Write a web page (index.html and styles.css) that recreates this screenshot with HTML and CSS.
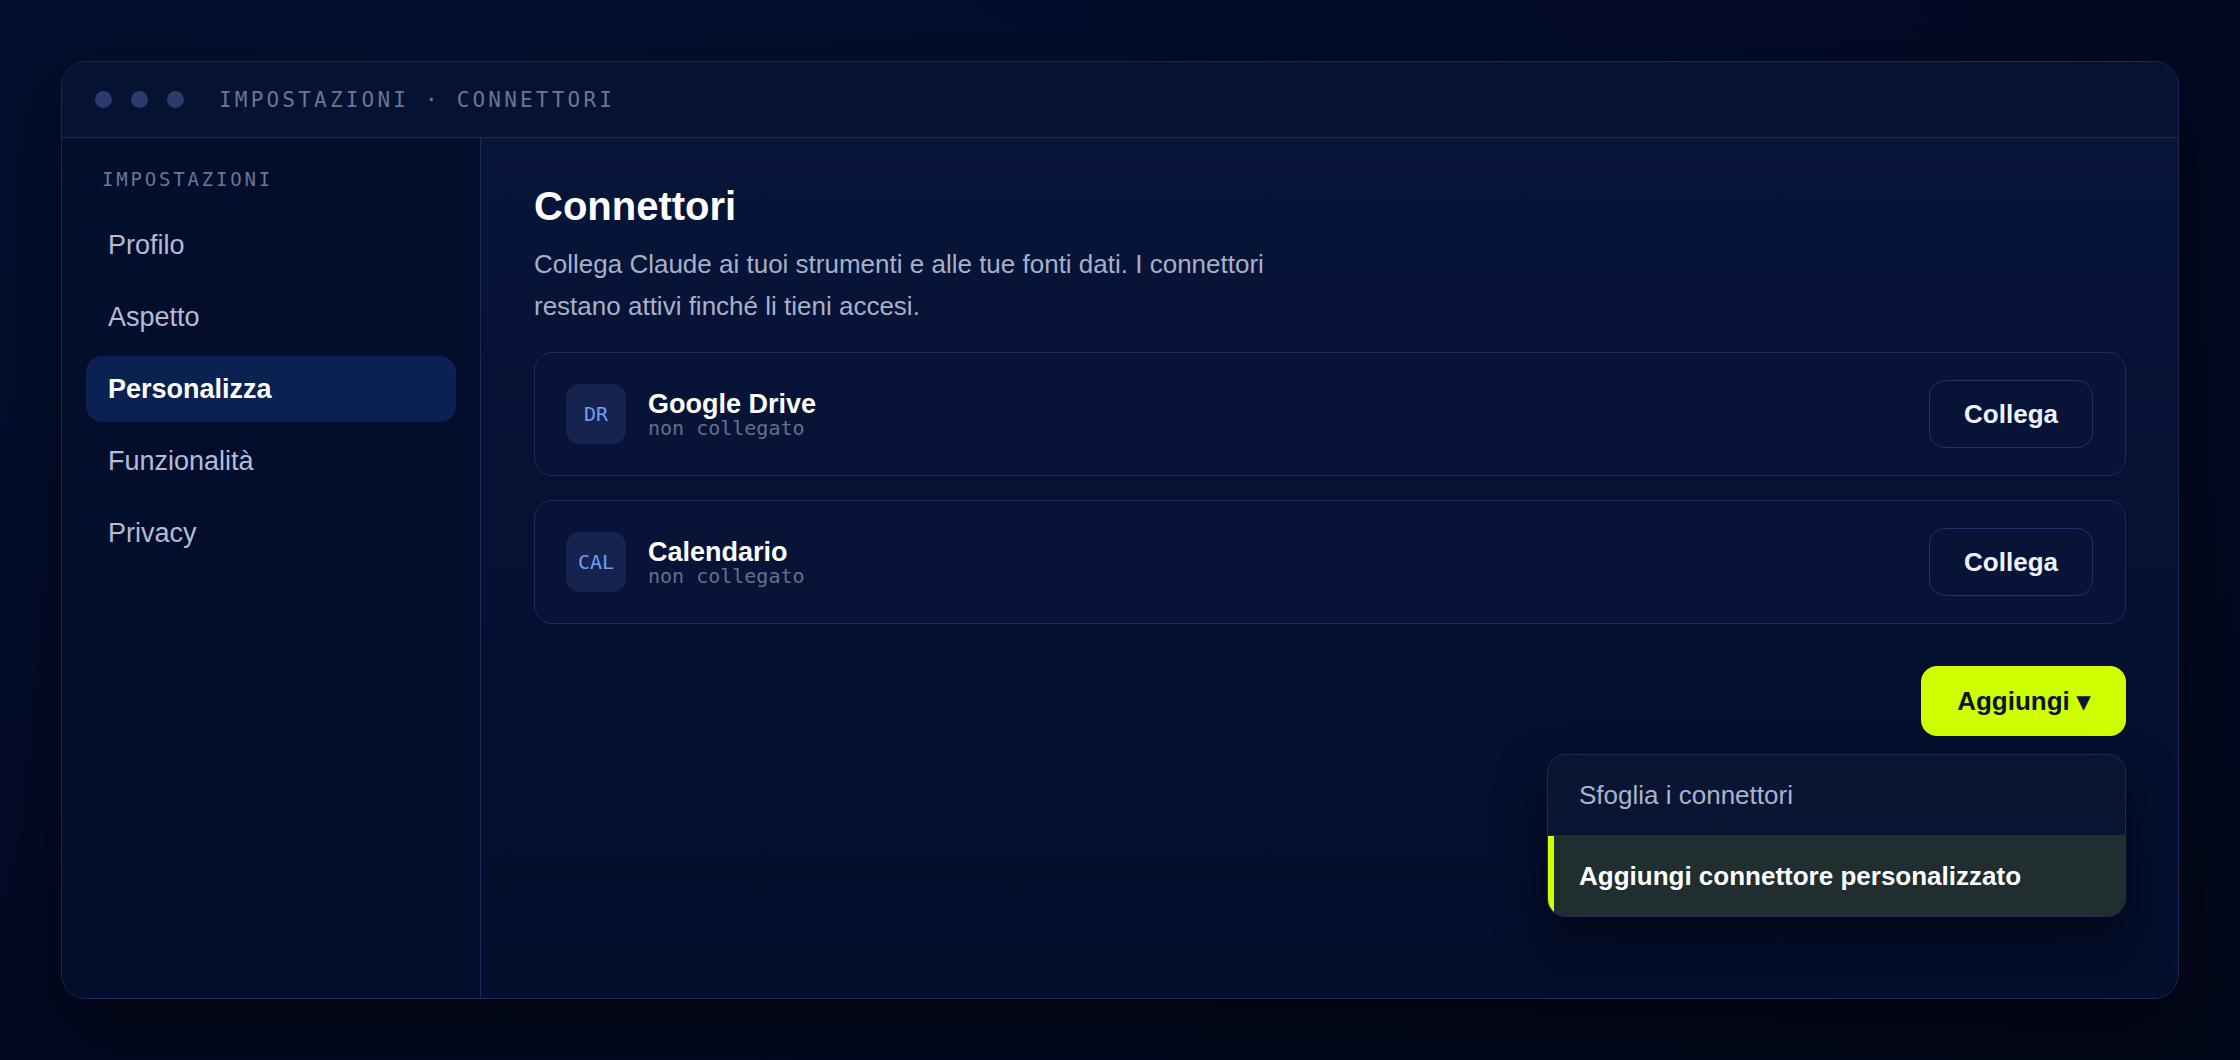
FILE: index.html
```html
<!DOCTYPE html>
<html lang="it">
<head>
    <meta charset="UTF-8">
    <meta name="viewport" content="width=device-width, initial-scale=1.0">
    <title>Impostazioni · Connettori</title>
    <link rel="stylesheet" href="styles.css">
</head>
<body>
    <div class="window">
        <div class="titlebar">
            <div class="dots">
                <span class="dot"></span>
                <span class="dot"></span>
                <span class="dot"></span>
            </div>
            <span class="titlebar-text">IMPOSTAZIONI · CONNETTORI</span>
        </div>

        <div class="window-body">
            <aside class="sidebar">
                <div class="sidebar-label">IMPOSTAZIONI</div>
                <nav class="sidebar-nav">
                    <a href="#" class="nav-item">Profilo</a>
                    <a href="#" class="nav-item">Aspetto</a>
                    <a href="#" class="nav-item active">Personalizza</a>
                    <a href="#" class="nav-item">Funzionalità</a>
                    <a href="#" class="nav-item">Privacy</a>
                </nav>
            </aside>

            <main class="content">
                <h1>Connettori</h1>
                <p class="intro">Collega Claude ai tuoi strumenti e alle tue fonti dati. I connettori restano attivi finché li tieni accesi.</p>

                <div class="connector-list">
                    <div class="connector">
                        <div class="connector-icon">DR</div>
                        <div class="connector-info">
                            <div class="connector-name">Google Drive</div>
                            <div class="connector-status">non collegato</div>
                        </div>
                        <button class="btn-outline">Collega</button>
                    </div>
                    <div class="connector">
                        <div class="connector-icon">CAL</div>
                        <div class="connector-info">
                            <div class="connector-name">Calendario</div>
                            <div class="connector-status">non collegato</div>
                        </div>
                        <button class="btn-outline">Collega</button>
                    </div>
                </div>

                <div class="actions">
                    <div class="add-wrap">
                        <button class="btn-add">Aggiungi ▾</button>
                        <!-- menu aperto -->
                        <div class="menu">
                            <div class="menu-item">Sfoglia i connettori</div>
                            <div class="menu-item selected">Aggiungi connettore personalizzato</div>
                        </div>
                    </div>
                </div>
            </main>
        </div>
    </div>
</body>
</html>
```

FILE: styles.css
```css
* {
    box-sizing: border-box;
}

html, body {
    height: 100%;
}

body {
    margin: 0;
    padding: 61px;
    font-family: "Liberation Sans", Arial, sans-serif;
    background: radial-gradient(ellipse at 20% 20%, #041034 0%, #030b27 55%, #020719 100%);
    color: #ffffff;
}

.window {
    height: 100%;
    display: flex;
    flex-direction: column;
    border: 1px solid #1b2a5a;
    border-radius: 25px;
    background: #050f2f;
    box-shadow: 0 30px 80px rgba(0, 0, 0, 0.55);
    overflow: hidden;
}

/* barra del titolo */
.titlebar {
    height: 76px;
    flex-shrink: 0;
    display: flex;
    align-items: center;
    gap: 35px;
    padding: 0 33px;
    background: #061232;
    border-bottom: 1px solid #1b2a5a;
}

.dots {
    display: flex;
    gap: 19px;
}

.dot {
    width: 17px;
    height: 17px;
    border-radius: 50%;
    background: #2a3b6f;
}

.titlebar-text {
    font-family: "DejaVu Sans Mono", monospace;
    font-size: 21px;
    letter-spacing: 3.2px;
    color: #6b7594;
}

.window-body {
    flex: 1;
    display: flex;
    min-height: 0;
}

/* sidebar */
.sidebar {
    width: 419px;
    flex-shrink: 0;
    padding: 30px 24px;
    background: #030e2d;
    border-right: 1px solid #1b2a5a;
}

.sidebar-label {
    font-family: "DejaVu Sans Mono", monospace;
    font-size: 19px;
    line-height: 22px;
    letter-spacing: 2.8px;
    color: #6b7594;
    padding-left: 16px;
    margin-bottom: 22px;
}

.sidebar-nav {
    display: flex;
    flex-direction: column;
    gap: 6px;
}

.nav-item {
    display: block;
    padding: 17px 22px;
    font-size: 27px;
    line-height: 32px;
    color: #b3bcd4;
    text-decoration: none;
    border-radius: 16px;
}

.nav-item.active {
    background: #0b2152;
    color: #ffffff;
    font-weight: bold;
}

/* contenuto */
.content {
    flex: 1;
    padding: 44px 52px 0 53px;
    background: linear-gradient(180deg, #071539 0%, #040e2d 100%);
}

h1 {
    margin: 0;
    font-size: 40px;
    line-height: 48px;
    font-weight: bold;
}

.intro {
    margin: 14px 0 25px;
    max-width: 780px;
    font-size: 26px;
    line-height: 1.6;
    color: #a6b0c8;
}

.connector-list {
    display: flex;
    flex-direction: column;
    gap: 24px;
}

.connector {
    display: flex;
    align-items: center;
    gap: 22px;
    padding: 27px 32px 27px 31px;
    background: #071438;
    border: 1px solid #1c2b5c;
    border-radius: 18px;
}

.connector-icon {
    width: 60px;
    height: 60px;
    display: flex;
    align-items: center;
    justify-content: center;
    border-radius: 14px;
    background: #15234e;
    color: #6c9ff2;
    font-family: "DejaVu Sans Mono", monospace;
    font-size: 20px;
}

.connector-info {
    flex: 1;
}

.connector-name {
    font-size: 27px;
    line-height: 1.05;
    font-weight: bold;
}

.connector-status {
    font-family: "DejaVu Sans Mono", monospace;
    font-size: 20px;
    line-height: 1.05;
    color: #646f8c;
}

.btn-outline {
    padding: 18px 34px;
    font-family: inherit;
    font-size: 26px;
    line-height: 30px;
    font-weight: bold;
    color: #eef2ff;
    background: transparent;
    border: 1px solid #22326a;
    border-radius: 16px;
}

.actions {
    display: flex;
    justify-content: flex-end;
    margin-top: 42px;
}

.add-wrap {
    position: relative;
}

.btn-add {
    padding: 20px 36px;
    font-family: inherit;
    font-size: 26px;
    line-height: 30px;
    font-weight: bold;
    color: #0b1433;
    background: #d0ff00;
    border: none;
    border-radius: 16px;
}

.menu {
    position: absolute;
    top: calc(100% + 18px);
    right: 0;
    width: 579px;
    background: #0a1533;
    border: 1px solid #1e2c58;
    border-radius: 18px;
    overflow: hidden;
    box-shadow: 0 24px 48px rgba(0, 0, 0, 0.5);
}

.menu-item {
    padding: 25px 31px;
    font-size: 26px;
    line-height: 30px;
    color: #a9b3cc;
}

.menu-item + .menu-item {
    border-top: 1px solid #1b2850;
}

.menu-item.selected {
    background: #202e30;
    color: #ffffff;
    font-weight: bold;
    box-shadow: inset 6px 0 0 #d0ff00;
}
```
